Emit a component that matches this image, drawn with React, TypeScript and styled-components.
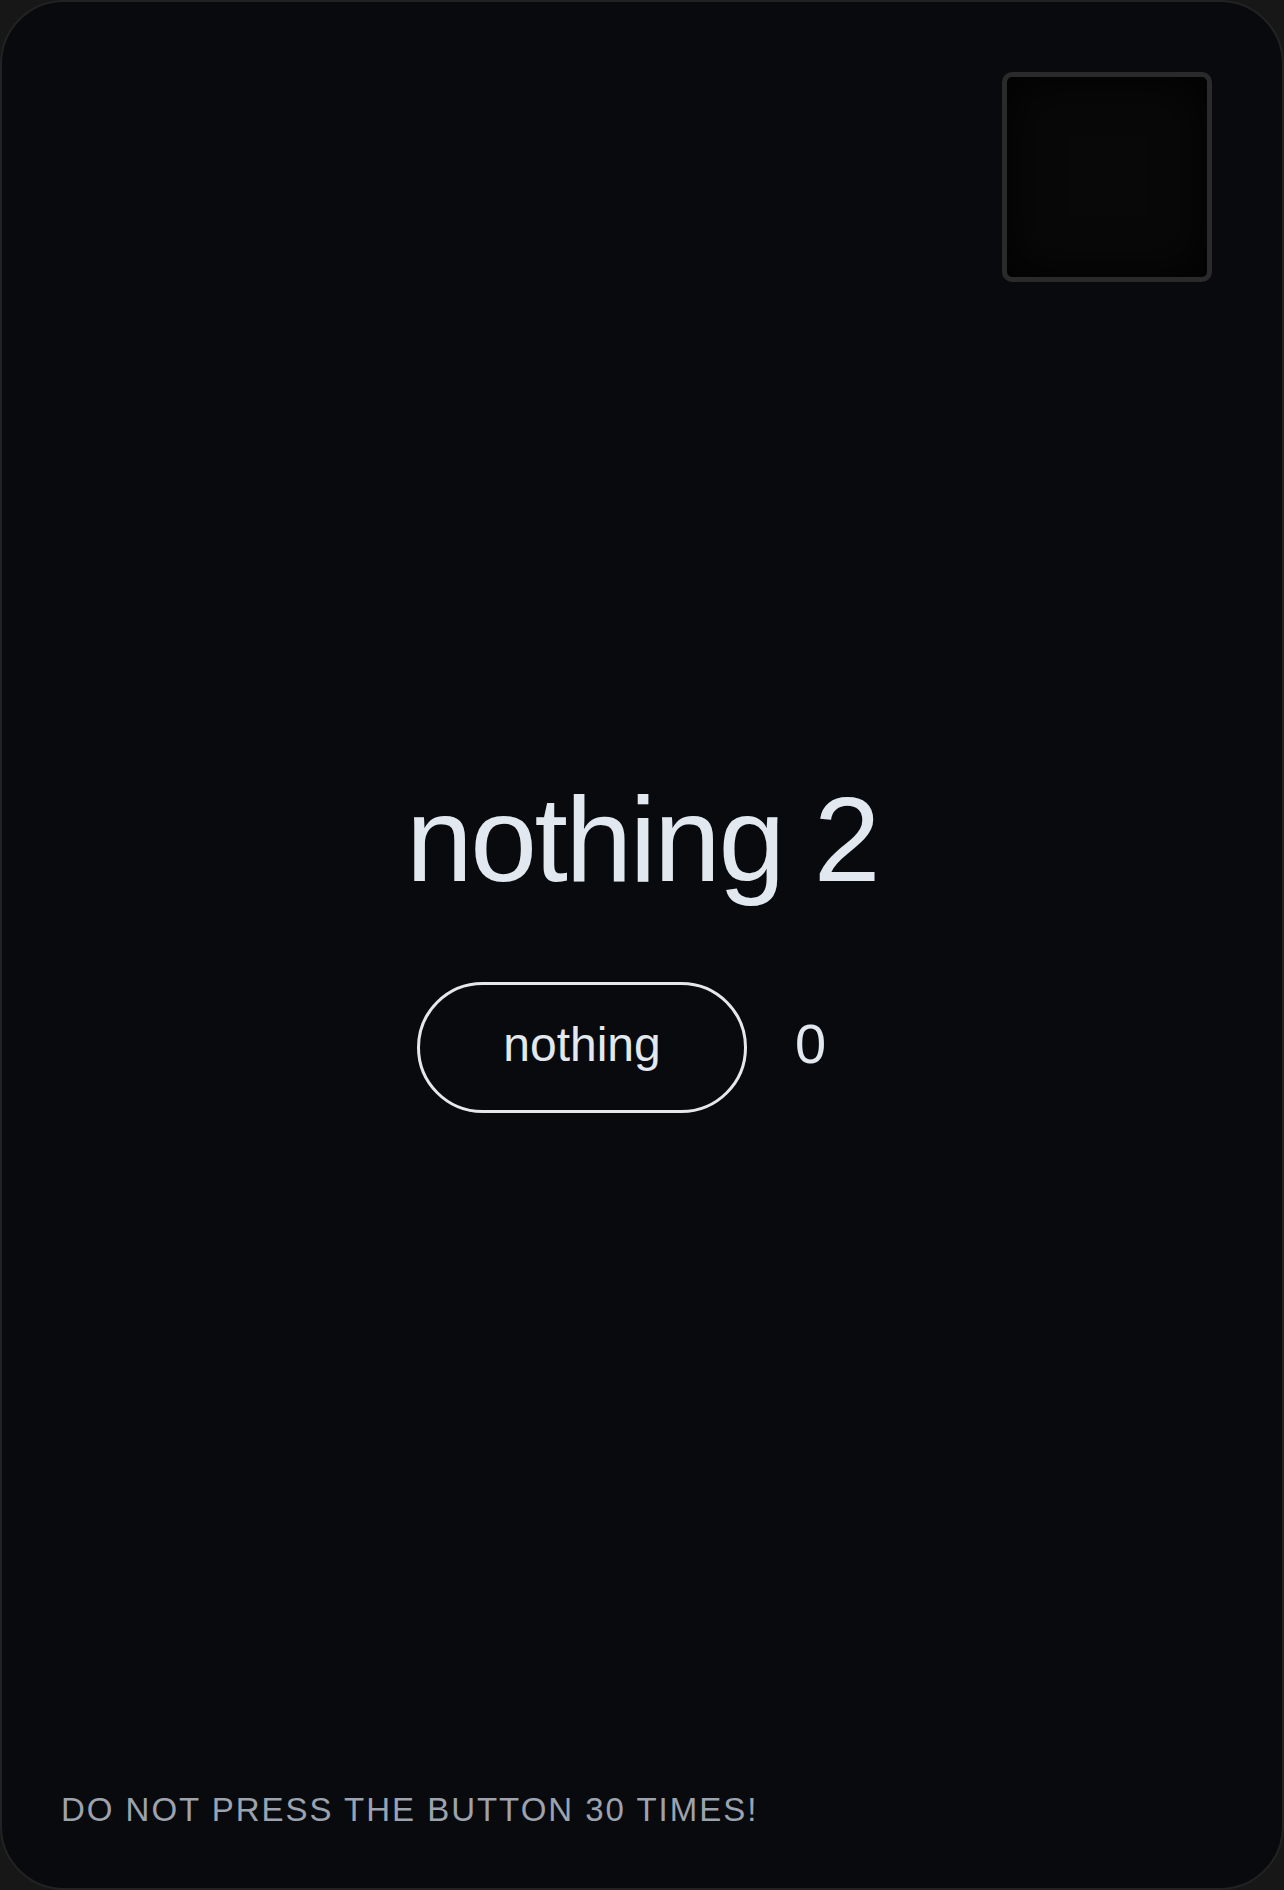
import React, { useState } from 'react'
import styled, { createGlobalStyle } from 'styled-components'

const GlobalStyle = createGlobalStyle`
    html, body {
        margin: 0;
        padding: 0;
        background: #171717;
    }
    * {
        box-sizing: border-box;
    }
`

const Card = styled.div`
    display: flex;
    flex-direction: column;
    min-height: 100vh;
    background-color: #090a0e;
    border: 2px solid #222222;
    border-radius: 64px;
    overflow: hidden;
    font-family: "Liberation Sans", Arial, sans-serif;
`

const Header = styled.div`
    display: flex;
    justify-content: flex-end;
    padding: 70px 70px 0;
`

const Box = styled.div`
    width: 210px;
    height: 210px;
    border: 5px solid #2a2a2a;
    border-radius: 10px;
    background-color: #080808;
    box-shadow: inset 0 0 50px rgba(0, 0, 0, 0.95), 0 0 40px rgba(255, 255, 255, 0.015);
`

const Main = styled.main`
    flex: 1;
    display: flex;
    flex-direction: column;
    align-items: center;
    justify-content: center;
    gap: 83px;
    padding-bottom: 182px;
`

const Title = styled.h1`
    margin: 0;
    font-size: 120px;
    font-weight: 400;
    line-height: 1;
    letter-spacing: -0.02em;
    color: #e2e8f0;
`

const Row = styled.div`
    display: flex;
    align-items: center;
    gap: 48px;
`

const Button = styled.button`
    width: 330px;
    height: 131px;
    padding: 0 0 6px;
    border: 3px solid #e5e7eb;
    border-radius: 9999px;
    background: transparent;
    color: #e2e8f0;
    font-family: inherit;
    font-size: 48px;
    cursor: pointer;
`

const Count = styled.span`
    width: 72px;
    margin-bottom: 8px;
    font-size: 56px;
    color: #e2e8f0;
`

const Footer = styled.footer`
    padding: 0 0 59px 59px;
    font-size: 33px;
    letter-spacing: 0.06em;
    text-transform: uppercase;
    color: #9ca3af;
`

export default function App() {
    const [count, setCount] = useState(0)

    return (
        <>
            <GlobalStyle />
            <Card>
                <Header>
                    <Box />
                </Header>
                <Main>
                    <Title>nothing 2</Title>
                    <Row>
                        <Button onClick={() => setCount(count + 1)}>nothing</Button>
                        <Count>{count}</Count>
                    </Row>
                </Main>
                <Footer>Do not press the button 30 times!</Footer>
            </Card>
        </>
    )
}
